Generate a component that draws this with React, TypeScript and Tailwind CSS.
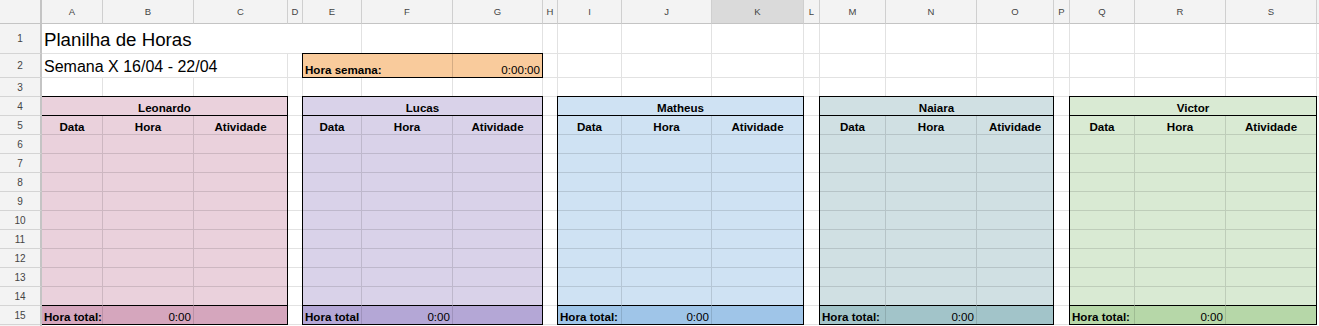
import React from 'react'

// column letters with their pixel widths (gridline included)
const columns = [
  { l: 'A', w: 'w-[61px]' },
  { l: 'B', w: 'w-[91px]' },
  { l: 'C', w: 'w-[94px]' },
  { l: 'D', w: 'w-[15px]' },
  { l: 'E', w: 'w-[59px]' },
  { l: 'F', w: 'w-[91px]' },
  { l: 'G', w: 'w-[90px]' },
  { l: 'H', w: 'w-[15px]' },
  { l: 'I', w: 'w-[64px]' },
  { l: 'J', w: 'w-[90px]' },
  { l: 'K', w: 'w-[92px]' },
  { l: 'L', w: 'w-[16px]' },
  { l: 'M', w: 'w-[66px]' },
  { l: 'N', w: 'w-[91px]' },
  { l: 'O', w: 'w-[77px]' },
  { l: 'P', w: 'w-[16px]' },
  { l: 'Q', w: 'w-[65px]' },
  { l: 'R', w: 'w-[91px]' },
  { l: 'S', w: 'w-[91px]' },
]

const people = [
  { name: 'Leonardo', total: 'Hora total:', w: 'w-[246px]', cols: 'grid-cols-[61px_91px_1fr]', fill: 'bg-[#ead1dc]', foot: 'bg-[#d5a6bd]', first: true },
  { name: 'Lucas', total: 'Hora total', w: 'w-[241px]', cols: 'grid-cols-[59px_91px_1fr]', fill: 'bg-[#d9d2e9]', foot: 'bg-[#b4a7d6]', first: false },
  { name: 'Matheus', total: 'Hora total:', w: 'w-[247px]', cols: 'grid-cols-[64px_90px_1fr]', fill: 'bg-[#cfe2f3]', foot: 'bg-[#9fc5e8]', first: false },
  { name: 'Naiara', total: 'Hora total:', w: 'w-[235px]', cols: 'grid-cols-[66px_91px_1fr]', fill: 'bg-[#d0e0e3]', foot: 'bg-[#a2c4c9]', first: false },
  { name: 'Victor', total: 'Hora total:', w: 'w-[248px]', cols: 'grid-cols-[65px_91px_1fr]', fill: 'bg-[#d9ead3]', foot: 'bg-[#b6d7a8]', first: false },
]

const spacers = ['w-[15px]', 'w-[15px]', 'w-[16px]', 'w-[16px]']

function RowHeader({ n, h }: { n: number; h: string }) {
  return (
    <div className={`${h} w-[42px] shrink-0 bg-[#f3f3f3] border-r-2 border-b border-r-[#c4c4c4] border-b-[#d4d4d4] flex items-center justify-center text-[10px] text-[#444]`}>
      {n}
    </div>
  )
}

function Cell({ w }: { w: string }) {
  return <div className={`${w} shrink-0 border-r border-b border-[#e2e2e2]`} />
}

function Block({ p }: { p: (typeof people)[number] }) {
  const blank = Array.from({ length: 8 })
  return (
    <div
      className={`${p.w} ${p.first ? '' : '-ml-px border-l'} -mt-px h-[229px] shrink-0 border-t border-r border-b border-black ${p.fill} grid ${p.cols} grid-rows-[repeat(11,19px)_1fr] text-[11.6px] leading-[13px] text-black`}
    >
      <div className="col-span-3 border-b border-black flex items-end justify-center pb-[1.5px] font-bold">
        {p.name}
      </div>
      {['Data', 'Hora', 'Atividade'].map((h, i) => (
        <div
          key={h}
          className={`${i < 2 ? 'border-r' : ''} border-b border-black/12 flex items-end justify-center pb-[1.5px] font-bold`}
        >
          {h}
        </div>
      ))}
      {blank.map((_, r) =>
        [0, 1, 2].map((c) => (
          <div key={`${r}-${c}`} className={`${c < 2 ? 'border-r' : ''} border-b border-black/12`} />
        ))
      )}
      {[0, 1, 2].map((c) => (
        <div key={`last-${c}`} className={`${c < 2 ? 'border-r' : ''} border-b border-r-black/12 border-b-black`} />
      ))}
      <div className={`${p.foot} border-r border-black/12 flex items-end pl-[2px] pb-[1.5px] font-bold whitespace-nowrap`}>
        {p.total}
      </div>
      <div className={`${p.foot} border-r border-black/12 flex items-end justify-end pr-[2px] pb-[1.5px]`}>
        0:00
      </div>
      <div className={p.foot} />
    </div>
  )
}

function Spacer({ w }: { w: string }) {
  return (
    <div className={`${w} shrink-0 flex flex-col`}>
      {Array.from({ length: 12 }).map((_, i) => (
        <div key={i} className="h-[19px] shrink-0 border-b border-[#e2e2e2]" />
      ))}
    </div>
  )
}

export default function App() {
  return (
    <div className="w-[1319px] h-[326px] overflow-hidden bg-white font-['Liberation_Sans',Arial,sans-serif] text-black">
      {/* column letters */}
      <div className="flex h-[24px]">
        <div className="w-[42px] shrink-0 bg-[#f3f3f3] border-r-2 border-b border-[#c4c4c4]" />
        {columns.map((c) => (
          <div
            key={c.l}
            className={`${c.w} shrink-0 ${c.l === 'K' ? 'bg-[#dadada]' : 'bg-[#f3f3f3]'} border-r border-b border-r-[#cfcfcf] border-b-[#c4c4c4] flex items-center justify-center pt-px text-[9.5px] text-[#444]`}
          >
            {c.l}
          </div>
        ))}
        <div className="flex-1 bg-[#f3f3f3] border-b border-[#c4c4c4]" />
      </div>

      {/* row 1 */}
      <div className="flex h-[30px]">
        <RowHeader n={1} h="h-[30px]" />
        <div className="w-[320px] shrink-0 border-r border-b border-[#e2e2e2] flex items-end pl-[2px] pb-[2.5px] text-[18.7px] leading-[22px] whitespace-nowrap">
          Planilha de Horas
        </div>
        {columns.slice(5).map((c) => (
          <Cell key={c.l} w={c.w} />
        ))}
        <div className="flex-1 border-b border-[#e2e2e2]" />
      </div>

      {/* row 2 */}
      <div className="flex h-[24px]">
        <RowHeader n={2} h="h-[24px]" />
        <div className="w-[246px] shrink-0 border-r border-b border-[#e2e2e2] flex items-end pl-[2px] pb-px text-[16px] leading-[18px] whitespace-nowrap">
          Semana X 16/04 - 22/04
        </div>
        <Cell w="w-[15px]" />
        <div className="-ml-px -mt-px h-[25px] w-[241px] shrink-0 border border-black bg-[#f9cb9c] flex text-[11.6px] leading-[13px]">
          <div className="w-[150px] shrink-0 border-r border-black/15 flex items-end pl-[2px] pb-[1.5px] font-bold whitespace-nowrap">
            Hora semana:
          </div>
          <div className="flex-1 flex items-end justify-end pr-[2px] pb-[1.5px]">0:00:00</div>
        </div>
        {columns.slice(7).map((c) => (
          <Cell key={c.l} w={c.w} />
        ))}
        <div className="flex-1 border-b border-[#e2e2e2]" />
      </div>

      {/* row 3 */}
      <div className="flex h-[19px]">
        <RowHeader n={3} h="h-[19px]" />
        {columns.map((c) => (
          <Cell key={c.l} w={c.w} />
        ))}
        <div className="flex-1 border-b border-[#e2e2e2]" />
      </div>

      {/* rows 4-15: the five timesheets */}
      <div className="flex h-[228px]">
        <div className="flex flex-col">
          {Array.from({ length: 12 }).map((_, i) => (
            <RowHeader key={i} n={i + 4} h="h-[19px]" />
          ))}
        </div>
        {people.map((p, i) => (
          <React.Fragment key={p.name}>
            <Block p={p} />
            {i < spacers.length && <Spacer w={spacers[i]} />}
          </React.Fragment>
        ))}
        <div className="flex-1" />
      </div>

      <div className="flex h-px">
        <div className="w-[42px] shrink-0 bg-[#f3f3f3] border-r-2 border-[#c4c4c4]" />
      </div>
    </div>
  )
}
